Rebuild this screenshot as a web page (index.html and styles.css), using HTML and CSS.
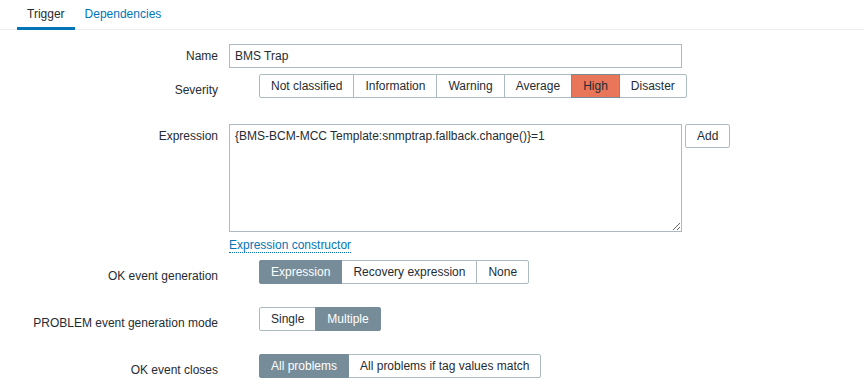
FILE: index.html
```html
<!DOCTYPE html>
<html lang="en">
<head>
  <meta charset="UTF-8" />
  <title>Trigger</title>
  <link rel="stylesheet" href="styles.css">
</head>
<body>
  <ul class="tabs">
    <li class="tab active"><a href="#">Trigger</a></li>
    <li class="tab"><a href="#">Dependencies</a></li>
  </ul>

  <form class="form-list">
    <div class="form-row row-name">
      <label class="form-label">Name</label>
      <div class="form-field">
        <input type="text" class="text-input" value="BMS Trap">
      </div>
    </div>

    <div class="form-row row-severity">
      <label class="form-label label-radio">Severity</label>
      <div class="form-field">
        <ul class="seg">
          <li>Not classified</li>
          <li>Information</li>
          <li>Warning</li>
          <li>Average</li>
          <li class="sev-high">High</li>
          <li>Disaster</li>
        </ul>
      </div>
    </div>

    <div class="form-row row-expression">
      <label class="form-label">Expression</label>
      <div class="form-field">
        <div class="expr-box">
          <textarea class="text-area">{BMS-BCM-MCC Template:snmptrap.fallback.change()}=1</textarea>
          <button type="button" class="btn">Add</button>
        </div>
        <a href="#" class="link-dotted">Expression constructor</a>
      </div>
    </div>

    <div class="form-row row-radio">
      <label class="form-label label-radio">OK event generation</label>
      <div class="form-field">
        <ul class="seg">
          <li class="selected">Expression</li>
          <li>Recovery expression</li>
          <li>None</li>
        </ul>
      </div>
    </div>

    <div class="form-row row-radio">
      <label class="form-label label-radio">PROBLEM event generation mode</label>
      <div class="form-field">
        <ul class="seg">
          <li>Single</li>
          <li class="selected">Multiple</li>
        </ul>
      </div>
    </div>

    <div class="form-row row-radio">
      <label class="form-label label-radio">OK event closes</label>
      <div class="form-field">
        <ul class="seg">
          <li class="selected">All problems</li>
          <li>All problems if tag values match</li>
        </ul>
      </div>
    </div>
  </form>
</body>
</html>
```

FILE: styles.css
```css
body {
  margin: 0;
  background-color: #fff;
  color: #1f2c33;
  font-family: "Liberation Sans", Arial, sans-serif;
  font-size: 12px;
  line-height: 14px;
}
a {
  color: #0275b8;
  text-decoration: none;
}
.tabs {
  display: flex;
  margin: 0;
  padding: 0 0 0 17px;
  list-style: none;
  border-bottom: 1px solid #ebeef0;
}
.tab a {
  display: block;
  padding: 7px 10px 6px;
  margin-bottom: -1px;
  border-bottom: 3px solid transparent;
}
.tab.active a {
  color: #1f2c33;
  border-bottom-color: #0275b8;
}
.form-list {
  padding-top: 14px;
}
.form-row {
  display: grid;
  grid-template-columns: 218px 1fr;
  column-gap: 11px;
}
.form-label {
  text-align: right;
  padding-top: 5px;
}
.label-radio {
  padding-top: 9px;
}
.row-severity {
  margin-top: 6px;
}
.row-expression {
  margin-top: 26px;
}
.row-radio {
  margin-top: 23px;
}
.row-expression + .row-radio {
  margin-top: 7px;
}
.text-input,
.text-area {
  box-sizing: border-box;
  width: 453px;
  margin: 0;
  padding: 4px 5px;
  border: 1px solid #acbbc2;
  border-radius: 0;
  font: inherit;
  color: #1f2c33;
  background: #fff;
}
.text-input {
  display: block;
  height: 24px;
}
.text-area {
  height: 108px;
  resize: vertical;
}
.expr-box {
  display: flex;
  align-items: flex-start;
  gap: 3px;
}
.btn {
  height: 24px;
  padding: 0 11px;
  border: 1px solid #acbbc2;
  border-radius: 2px;
  background: #fff;
  color: #1f2c33;
  font: inherit;
}
.link-dotted {
  display: inline-block;
  margin-top: 6px;
  border-bottom: 1px dotted #0275b8;
  line-height: 14px;
}
.seg {
  display: flex;
  margin: 0 0 0 30px;
  padding: 0;
  list-style: none;
}
.seg li {
  height: 24px;
  box-sizing: border-box;
  padding: 0 11px;
  line-height: 22px;
  border: 1px solid #acbbc2;
  background: #fff;
  white-space: nowrap;
}
.seg li + li {
  margin-left: -1px;
}
.seg li:first-child {
  border-radius: 2px 0 0 2px;
}
.seg li:last-child {
  border-radius: 0 2px 2px 0;
}
.seg li.selected {
  position: relative;
  background: #768d99;
  border-color: #768d99;
  color: #fff;
}
.seg li.sev-high {
  position: relative;
  background: #e97659;
  border-color: #768d99;
}
```
